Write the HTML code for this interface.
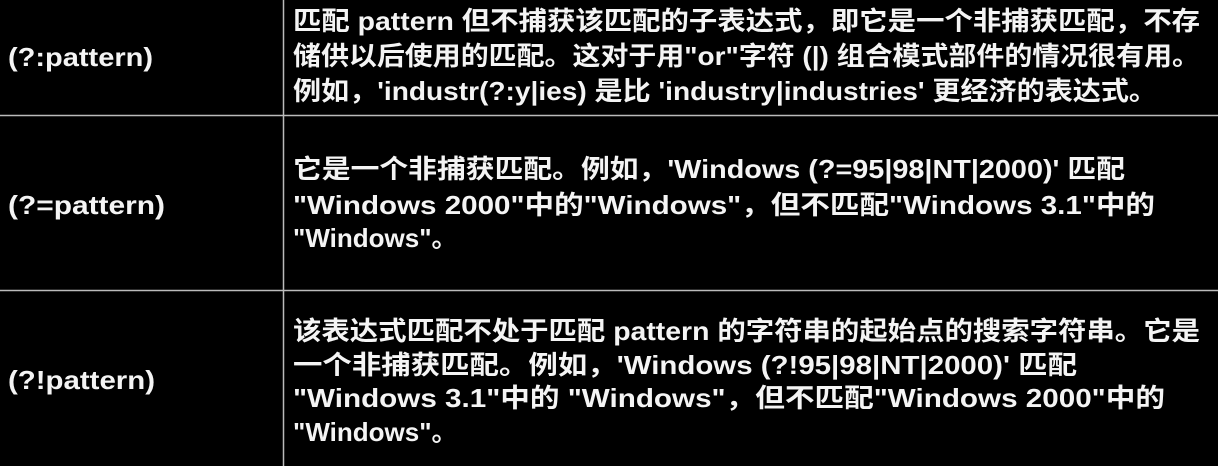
<!DOCTYPE html>
<html><head><meta charset="utf-8"><style>
html,body{margin:0;padding:0;background:#000;width:1218px;height:466px;overflow:hidden}
svg{display:block}
text{font-family:"Liberation Sans","Noto Sans CJK SC",sans-serif;font-weight:bold;font-size:26px;fill:#f4f4f4}
</style></head><body>
<svg width="1218" height="466" viewBox="0 0 1218 466">
<rect width="1218" height="466" fill="#000"/>
<line x1="283.5" y1="0" x2="283.5" y2="466" stroke="#bbb" stroke-width="1.5"/>
<line x1="0" y1="115.5" x2="1218" y2="115.5" stroke="#bbb" stroke-width="1.5"/>
<line x1="0" y1="290.5" x2="1218" y2="290.5" stroke="#bbb" stroke-width="1.5"/>

<text x="8" y="66" textLength="145" lengthAdjust="spacingAndGlyphs">(?:pattern)</text>
<text x="8" y="214" textLength="157" lengthAdjust="spacingAndGlyphs">(?=pattern)</text>
<text x="8" y="389" textLength="147" lengthAdjust="spacingAndGlyphs">(?!pattern)</text>

<text x="293" y="30" textLength="907" lengthAdjust="spacingAndGlyphs">匹配 pattern 但不捕获该匹配的子表达式，即它是一个非捕获匹配，不存</text>
<text x="293" y="65" textLength="907" lengthAdjust="spacingAndGlyphs">储供以后使用的匹配。这对于用"or"字符 (|) 组合模式部件的情况很有用。</text>
<text x="293" y="100" textLength="864" lengthAdjust="spacingAndGlyphs">例如，'industr(?:y|ies) 是比 'industry|industries' 更经济的表达式。</text>

<text x="293" y="178" textLength="832" lengthAdjust="spacingAndGlyphs">它是一个非捕获匹配。例如，'Windows (?=95|98|NT|2000)' 匹配</text>
<text x="293" y="214" textLength="862" lengthAdjust="spacingAndGlyphs">"Windows 2000"中的"Windows"，但不匹配"Windows 3.1"中的</text>
<text x="293" y="247">"Windows"。</text>

<text x="293" y="340" textLength="907" lengthAdjust="spacingAndGlyphs">该表达式匹配不处于匹配 pattern 的字符串的起始点的搜索字符串。它是</text>
<text x="293" y="374" textLength="784" lengthAdjust="spacingAndGlyphs">一个非捕获匹配。例如，'Windows (?!95|98|NT|2000)' 匹配</text>
<text x="293" y="407" textLength="872" lengthAdjust="spacingAndGlyphs">"Windows 3.1"中的 "Windows"，但不匹配"Windows 2000"中的</text>
<text x="293" y="441">"Windows"。</text>
</svg>
</body></html>
